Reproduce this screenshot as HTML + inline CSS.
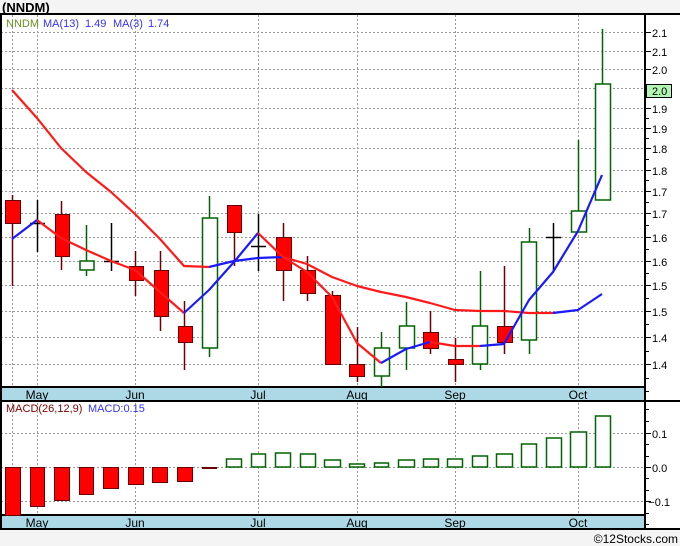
<!DOCTYPE html>
<html><head><meta charset="utf-8"><style>
html,body{margin:0;padding:0;background:#f4f4f4;}
svg{display:block;font-family:"Liberation Sans",sans-serif;}
</style></head><body>
<svg width="680" height="546" xmlns="http://www.w3.org/2000/svg">
<rect x="0" y="0" width="680" height="546" fill="#f4f4f4"/>
<text x="2" y="12" font-size="13" font-weight="bold" fill="#000">(NNDM)</text>
<rect x="0" y="14" width="680" height="515" fill="#fff"/>
<g stroke="#999" stroke-width="1" stroke-dasharray="2,2">
<line x1="12.5" y1="15" x2="12.5" y2="515"/>
<line x1="37.5" y1="15" x2="37.5" y2="515"/>
<line x1="135.5" y1="15" x2="135.5" y2="515"/>
<line x1="258.5" y1="15" x2="258.5" y2="515"/>
<line x1="357.5" y1="15" x2="357.5" y2="515"/>
<line x1="455.5" y1="15" x2="455.5" y2="515"/>
<line x1="578.5" y1="15" x2="578.5" y2="515"/>
<line x1="1" y1="32.5" x2="645" y2="32.5"/><line x1="1" y1="51.5" x2="645" y2="51.5"/>
<line x1="1" y1="69.5" x2="645" y2="69.5"/><line x1="1" y1="88.5" x2="645" y2="88.5"/>
<line x1="1" y1="108.5" x2="645" y2="108.5"/><line x1="1" y1="128.5" x2="645" y2="128.5"/>
<line x1="1" y1="148.5" x2="645" y2="148.5"/><line x1="1" y1="170.5" x2="645" y2="170.5"/>
<line x1="1" y1="191.5" x2="645" y2="191.5"/><line x1="1" y1="213.5" x2="645" y2="213.5"/>
<line x1="1" y1="237.5" x2="645" y2="237.5"/><line x1="1" y1="261.5" x2="645" y2="261.5"/>
<line x1="1" y1="285.5" x2="645" y2="285.5"/><line x1="1" y1="311.5" x2="645" y2="311.5"/>
<line x1="1" y1="337.5" x2="645" y2="337.5"/><line x1="1" y1="364.5" x2="645" y2="364.5"/>
<line x1="1" y1="433.5" x2="645" y2="433.5"/><line x1="1" y1="467.5" x2="645" y2="467.5"/>
<line x1="1" y1="501.5" x2="645" y2="501.5"/>
</g>
<rect x="1" y="387" width="644" height="14" fill="#add8e6"/>
<rect x="1" y="515" width="644" height="14" fill="#add8e6"/>
<g stroke="#000" stroke-width="2">
<line x1="0" y1="14" x2="680" y2="14"/>
<line x1="1" y1="14" x2="1" y2="530"/>
<line x1="645" y1="14" x2="645" y2="530"/>
<line x1="0" y1="387" x2="645" y2="387"/>
<line x1="0" y1="401" x2="680" y2="401"/>
<line x1="0" y1="515" x2="645" y2="515"/>
<line x1="0" y1="529" x2="680" y2="529"/>
</g>
<g font-size="12" fill="#000" text-anchor="middle">
<text x="37" y="399">May</text><text x="135" y="399">Jun</text><text x="258" y="399">Jul</text>
<text x="357" y="399">Aug</text><text x="455" y="399">Sep</text><text x="578" y="399">Oct</text>
<text x="37" y="527">May</text><text x="135" y="527">Jun</text><text x="258" y="527">Jul</text>
<text x="357" y="527">Aug</text><text x="455" y="527">Sep</text><text x="578" y="527">Oct</text>
</g>
<text x="6" y="27" font-size="11" fill="#6b8e23">NNDM</text>
<g font-size="11" fill="#3333ff">
<text x="43" y="27">MA(13)</text><text x="85" y="27">1.49</text>
<text x="113" y="27">MA(3)</text><text x="148" y="27">1.74</text>
<text x="88" y="412">MACD:0.15</text>
</g>
<text x="6" y="412" font-size="11" fill="#800000">MACD(26,12,9)</text>
<g stroke="#000" stroke-width="1">
<line x1="645" y1="32.5" x2="651" y2="32.5"/><line x1="645" y1="51.5" x2="651" y2="51.5"/>
<line x1="645" y1="69.5" x2="651" y2="69.5"/><line x1="645" y1="108.5" x2="651" y2="108.5"/>
<line x1="645" y1="128.5" x2="651" y2="128.5"/><line x1="645" y1="148.5" x2="651" y2="148.5"/>
<line x1="645" y1="170.5" x2="651" y2="170.5"/><line x1="645" y1="191.5" x2="651" y2="191.5"/>
<line x1="645" y1="213.5" x2="651" y2="213.5"/><line x1="645" y1="237.5" x2="651" y2="237.5"/>
<line x1="645" y1="261.5" x2="651" y2="261.5"/><line x1="645" y1="285.5" x2="651" y2="285.5"/>
<line x1="645" y1="311.5" x2="651" y2="311.5"/><line x1="645" y1="337.5" x2="651" y2="337.5"/>
<line x1="645" y1="364.5" x2="651" y2="364.5"/>
<line x1="645" y1="118.5" x2="649" y2="118.5"/><line x1="645" y1="138.5" x2="649" y2="138.5"/>
<line x1="645" y1="159.5" x2="649" y2="159.5"/><line x1="645" y1="180.5" x2="649" y2="180.5"/>
<line x1="645" y1="202.5" x2="649" y2="202.5"/><line x1="645" y1="225.5" x2="649" y2="225.5"/>
<line x1="645" y1="249.5" x2="649" y2="249.5"/><line x1="645" y1="273.5" x2="649" y2="273.5"/>
<line x1="645" y1="298.5" x2="649" y2="298.5"/><line x1="645" y1="324.5" x2="649" y2="324.5"/>
<line x1="645" y1="351.5" x2="649" y2="351.5"/><line x1="645" y1="378.5" x2="649" y2="378.5"/>
<line x1="645" y1="391.5" x2="649" y2="391.5"/>
<line x1="645" y1="409.5" x2="649" y2="409.5"/><line x1="645" y1="421.5" x2="649" y2="421.5"/>
<line x1="645" y1="433.5" x2="651" y2="433.5"/><line x1="645" y1="444.5" x2="649" y2="444.5"/>
<line x1="645" y1="456.5" x2="649" y2="456.5"/><line x1="645" y1="467.5" x2="651" y2="467.5"/>
<line x1="645" y1="478.5" x2="649" y2="478.5"/><line x1="645" y1="490.5" x2="649" y2="490.5"/>
<line x1="645" y1="501.5" x2="651" y2="501.5"/><line x1="645" y1="513.5" x2="649" y2="513.5"/>
<line x1="645" y1="524.5" x2="649" y2="524.5"/>
</g>
<g font-size="11" fill="#000">
<text x="652" y="37">2.1</text><text x="652" y="56">2.1</text><text x="652" y="74">2.0</text>
<text x="652" y="113">1.9</text><text x="652" y="133">1.9</text><text x="652" y="153">1.8</text>
<text x="652" y="175">1.8</text><text x="652" y="196">1.7</text><text x="652" y="218">1.7</text>
<text x="652" y="242">1.6</text><text x="652" y="266">1.6</text><text x="652" y="290">1.5</text>
<text x="652" y="316">1.5</text><text x="652" y="342">1.4</text><text x="652" y="369">1.4</text>
<text x="652" y="438">0.1</text><text x="652" y="472">0.0</text><text x="670" y="506" text-anchor="end">−0.1</text>
</g>
<rect x="646.5" y="84.5" width="25" height="13" fill="#b3f5b3" stroke="#000"/>
<text x="652" y="95" font-size="11" fill="#000">2.0</text>
<g stroke-width="1.5">
<g stroke="#6b0000">
<line x1="12.5" y1="195" x2="12.5" y2="286"/><line x1="61.5" y1="201" x2="61.5" y2="270"/>
<line x1="135.5" y1="251" x2="135.5" y2="296"/><line x1="160.5" y1="251" x2="160.5" y2="331"/>
<line x1="184.5" y1="301" x2="184.5" y2="370"/><line x1="234.5" y1="205" x2="234.5" y2="266"/>
<line x1="283.5" y1="223" x2="283.5" y2="301"/><line x1="307.5" y1="256" x2="307.5" y2="301"/>
<line x1="332.5" y1="291" x2="332.5" y2="364"/><line x1="357.5" y1="327" x2="357.5" y2="382"/>
<line x1="430.5" y1="311" x2="430.5" y2="354"/><line x1="455.5" y1="338" x2="455.5" y2="382"/>
<line x1="504.5" y1="266" x2="504.5" y2="354"/>
</g>
<g stroke="#006400">
<line x1="86.5" y1="225" x2="86.5" y2="276"/><line x1="209.5" y1="196" x2="209.5" y2="357"/>
<line x1="381.5" y1="332" x2="381.5" y2="387"/><line x1="406.5" y1="302" x2="406.5" y2="370"/>
<line x1="480.5" y1="271" x2="480.5" y2="370"/><line x1="529.5" y1="228" x2="529.5" y2="354"/>
<line x1="578.5" y1="140" x2="578.5" y2="211"/><line x1="602.5" y1="29" x2="602.5" y2="84"/>
</g>
<g stroke="#000">
<line x1="37.5" y1="200" x2="37.5" y2="252"/><line x1="30" y1="223.5" x2="45" y2="223.5"/>
<line x1="111.5" y1="223" x2="111.5" y2="271"/><line x1="104" y1="261.5" x2="119" y2="261.5"/>
<line x1="258.5" y1="214" x2="258.5" y2="271"/><line x1="251" y1="246.5" x2="266" y2="246.5"/>
<line x1="553.5" y1="223" x2="553.5" y2="271"/><line x1="546" y1="237.5" x2="561" y2="237.5"/>
</g>
</g>
<g fill="#ff0000" stroke="#6b0000" stroke-width="1">
<rect x="5.5" y="200.5" width="15" height="23"/><rect x="55.5" y="214.5" width="14" height="42"/>
<rect x="129.5" y="266.5" width="14" height="14"/><rect x="154.5" y="270.5" width="14" height="46"/>
<rect x="178.5" y="326.5" width="14" height="16"/><rect x="227.5" y="205.5" width="14" height="27"/>
<rect x="276.5" y="237.5" width="15" height="33"/><rect x="300.5" y="270.5" width="15" height="23"/>
<rect x="325.5" y="295.5" width="15" height="69"/><rect x="349.5" y="364.5" width="15" height="12"/>
<rect x="423.5" y="332.5" width="15" height="16"/><rect x="448.5" y="359.5" width="15" height="5"/>
<rect x="497.5" y="326.5" width="15" height="16"/>
</g>
<g fill="#fff" stroke="#006400" stroke-width="1.5">
<rect x="80" y="261" width="14" height="9"/><rect x="202.5" y="218" width="15" height="130"/>
<rect x="374.5" y="348" width="15" height="28"/><rect x="399.5" y="326" width="15" height="22"/>
<rect x="472.5" y="326" width="15" height="38"/><rect x="521.5" y="242" width="15" height="98"/>
<rect x="571.5" y="211" width="15" height="21"/><rect x="595.5" y="84" width="15" height="116"/>
</g>
<g fill="none" stroke-width="2.2" stroke-linejoin="round">
<polyline stroke="#ff1a1a" points="12,90 37,118 61,148 86,172 111,192 135,214 160,239 184,266 209,267"/>
<polyline stroke="#1a1aff" points="209,267 234,261 258,258 283,257"/>
<polyline stroke="#ff1a1a" points="283,257 307,264 332,277 357,286 381,292 406,297 430,303 455,310 480,311 504,311 529,313 553,313"/>
<polyline stroke="#1a1aff" points="553,313 578,310 602,294"/>
<polyline stroke="#1a1aff" points="12,239 37,220"/>
<polyline stroke="#ff1a1a" points="37,220 61,238 86,250 111,261 135,270 160,292 184,313"/>
<polyline stroke="#1a1aff" points="184,313 209,290 234,262 258,233"/>
<polyline stroke="#ff1a1a" points="258,233 283,257 307,272 332,297 357,343 381,363"/>
<polyline stroke="#1a1aff" points="381,363 406,349 430,342"/>
<polyline stroke="#ff1a1a" points="430,342 455,346 480,346"/>
<polyline stroke="#1a1aff" points="480,346 504,344 529,300 553,272 578,231 602,175"/>
</g>
<g fill="#ff0000" stroke="#6b0000" stroke-width="1">
<rect x="5.5" y="467.5" width="15" height="48"/><rect x="30.5" y="467.5" width="14" height="39"/>
<rect x="54.5" y="467.5" width="15" height="33"/><rect x="79.5" y="467.5" width="14" height="27"/>
<rect x="103.5" y="467.5" width="15" height="21"/><rect x="128.5" y="467.5" width="15" height="17"/>
<rect x="152.5" y="467.5" width="15" height="15"/><rect x="177.5" y="467.5" width="15" height="14"/>
</g>
<line x1="202" y1="468" x2="217" y2="468" stroke="#6b0000" stroke-width="2"/>
<g fill="#fff" stroke="#006400" stroke-width="1.5">
<rect x="226.5" y="459" width="15" height="8"/><rect x="251.5" y="454" width="14" height="13"/>
<rect x="275.5" y="453" width="15" height="14"/><rect x="300.5" y="454" width="15" height="13"/>
<rect x="324.5" y="460" width="16" height="7"/><rect x="349.5" y="464" width="15" height="3"/>
<rect x="374.5" y="463" width="14" height="4"/><rect x="398.5" y="460" width="16" height="7"/>
<rect x="423.5" y="459" width="15" height="8"/><rect x="447.5" y="459" width="15" height="8"/>
<rect x="472.5" y="456" width="15" height="11"/><rect x="496.5" y="454" width="16" height="13"/>
<rect x="521.5" y="444" width="15" height="23"/><rect x="546.5" y="438" width="15" height="29"/>
<rect x="570.5" y="432" width="16" height="35"/><rect x="595.5" y="416" width="15" height="51"/>
</g>
<text x="678" y="543" font-size="12" fill="#000" text-anchor="end">©12Stocks.com</text>
</svg>
</body></html>
